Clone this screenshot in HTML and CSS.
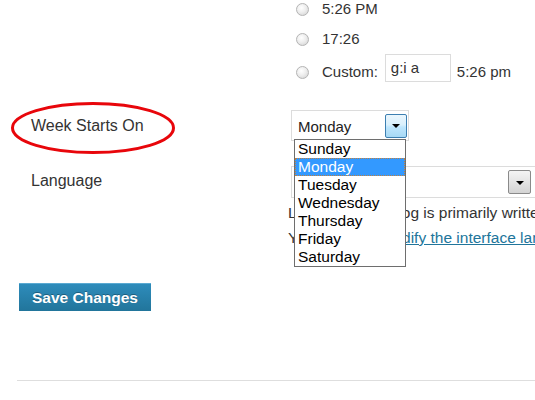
FILE: index.html
```html
<!DOCTYPE html>
<html>
<head>
<meta charset="utf-8">
<link rel="stylesheet" href="styles.css">
</head>
<body>
<div class="page">
  <div class="form">
    <div class="label"></div>
    <div class="field times">
      <div class="opt opt-1"><span class="radio"></span><span>5:26 PM</span></div>
      <div class="opt opt-2"><span class="radio"></span><span>17:26</span></div>
      <div class="opt opt-3"><span class="radio"></span><span>Custom:</span><span class="custom-input">g:i a</span><span>5:26 pm</span></div>
    </div>

    <div class="label week-label">Week Starts On</div>
    <div class="field week-field">
      <div class="select week-select">
        <span>Monday</span>
        <span class="arrow arrow-hover"><span class="tri"></span></span>
      </div>
      <ul class="dropdown">
        <li>Sunday</li>
        <li class="selected">Monday</li>
        <li>Tuesday</li>
        <li>Wednesday</li>
        <li>Thursday</li>
        <li>Friday</li>
        <li>Saturday</li>
      </ul>
    </div>

    <div class="label lang-label">Language</div>
    <div class="field lang-field">
      <div class="select lang-select">
        <span></span>
        <span class="arrow"><span class="tri"></span></span>
      </div>
      <p class="desc">Language this blog is primarily written in.<br>You can also <a href="#">modify the interface language</a> in your profile.</p>
    </div>
  </div>

  <div class="actions">
    <button class="save">Save Changes</button>
  </div>
  <div class="rule"></div>
</div>
<svg class="ellipse" width="166" height="54" viewBox="0 0 166 54"><ellipse cx="83" cy="27" rx="80.5" ry="24.5" fill="none" stroke="#e8060b" stroke-width="3"/></svg>
</body>
</html>
```
FILE: styles.css
```css
html, body {
  margin: 0;
  padding: 0;
  background: #fff;
  overflow: hidden;
}
body {
  width: 535px;
  height: 400px;
  position: relative;
  font-family: "Liberation Sans", Arial, sans-serif;
  color: #333;
}
.page {
  padding-left: 19px;
}
.form {
  display: grid;
  grid-template-columns: 269px 266px;
  overflow: visible;
}
.label {
  padding-left: 12px;
  font-size: 16px;
  line-height: 18px;
  color: #333;
}
.field {
  font-size: 15px;
  min-width: 0;
}
.times {
  padding-left: 8px;
}
.opt {
  display: flex;
  align-items: center;
  line-height: 18px;
}
.opt-1 { height: 18px; }
.opt-2 { height: 18px; margin-top: 12px; }
.opt-3 { margin-top: 6px; }
.radio {
  width: 11px;
  height: 11px;
  border-radius: 50%;
  border: 1px solid #b4b4b4;
  background: radial-gradient(circle at 40% 35%, #ffffff 0%, #eeeeee 45%, #cfcfcf 100%);
  margin-right: 13px;
  flex: none;
}
.custom-input {
  display: block;
  width: 59px;
  height: 26px;
  line-height: 26px;
  border: 1px solid #dcdcdc;
  padding-left: 5px;
  margin: 0 6px 8px 7px;
  color: #333;
}
.week-label {
  margin-top: 20px;
  padding-top: 7px;
}
.week-field {
  margin-top: 20px;
  position: relative;
  padding-left: 3px;
}
.select {
  display: flex;
  align-items: center;
  justify-content: space-between;
  border: 1px solid #dcdcdc;
  background: #fff;
  box-sizing: border-box;
  font-size: 15px;
  color: #222;
}
.week-select {
  width: 118px;
  height: 31px;
  padding: 0 1px 0 6px;
}
.week-select > span:first-child {
  margin-top: 2px;
}
.lang-select {
  width: 250px;
  height: 32px;
  padding: 0 9px 0 6px;
}
.arrow {
  display: flex;
  align-items: center;
  justify-content: center;
  box-sizing: border-box;
  width: 23px;
  height: 24px;
  border: 1px solid #8a8a8a;
  border-radius: 2px;
  background: linear-gradient(#f4f4f4, #d4d4d4);
}
.arrow-hover {
  width: 22px;
  border-color: #3c7fb1;
  background: linear-gradient(#eaf6fd 0%, #d9f0fc 45%, #bee6fd 55%, #a7d9f5 100%);
}
.tri {
  width: 0;
  height: 0;
  border-left: 4px solid transparent;
  border-right: 4px solid transparent;
  border-top: 4px solid #000;
  margin-top: 1px;
}
.dropdown {
  position: absolute;
  left: 6px;
  top: 29px;
  width: 110px;
  margin: 0;
  padding: 0;
  list-style: none;
  border: 1px solid #6e6e6e;
  background: #fff;
  z-index: 2;
  font-size: 15.5px;
  color: #000;
}
.dropdown li {
  height: 18px;
  line-height: 18px;
  padding-left: 3px;
}
.dropdown li.selected {
  background: #3399ff;
  color: #fff;
  outline: 1px dotted #c08040;
  outline-offset: -1px;
}
.lang-label {
  margin-top: 25px;
  padding-top: 6px;
}
.lang-field {
  margin-top: 25px;
  padding-left: 3px;
}
.desc {
  margin: 2px 0 0 -3px;
  font-size: 15.5px;
  line-height: 25px;
  color: #333;
  white-space: nowrap;
}
.desc a {
  color: #21759b;
  text-decoration: underline;
}
.actions {
  margin-top: 33px;
}
.save {
  display: block;
  width: 132px;
  height: 28px;
  padding: 0;
  border: 0;
  border-top: 1px solid #5aaad2;
  background: linear-gradient(#2e8cbb, #21759b);
  color: #fff;
  font-family: "Liberation Sans", Arial, sans-serif;
  font-weight: bold;
  font-size: 15.5px;
  text-shadow: 0 -1px 0 rgba(0,0,0,0.3);
}
.rule {
  margin: 69px 0 0 -2px;
  height: 1px;
  background: #dedede;
}
.ellipse {
  position: absolute;
  left: 10px;
  top: 101px;
}
```
